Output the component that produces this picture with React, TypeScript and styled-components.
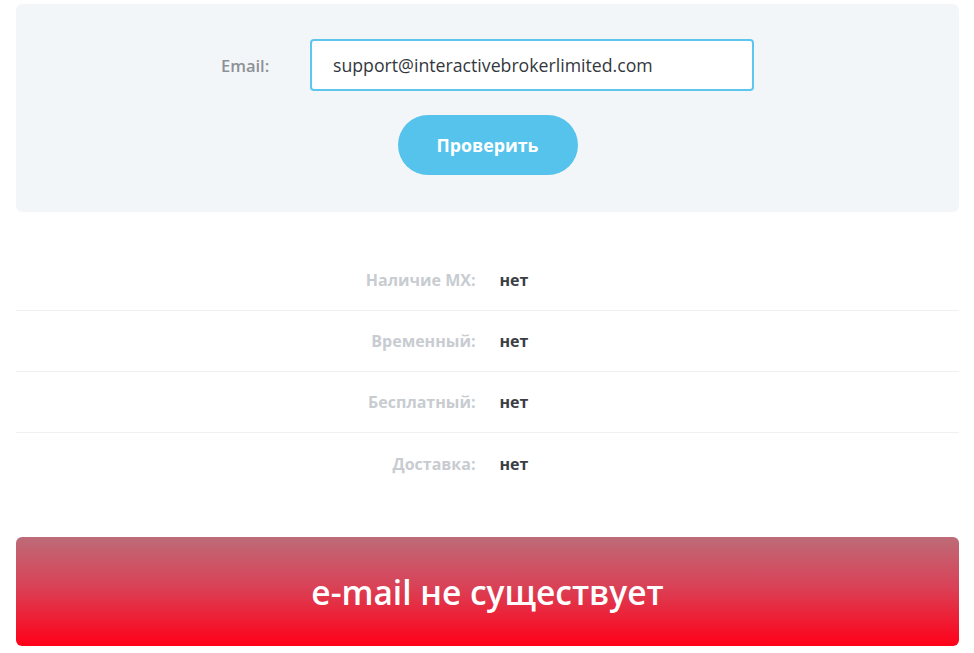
import React from 'react';
import styled, { createGlobalStyle } from 'styled-components';

const GlobalStyle = createGlobalStyle`
  html, body {
    margin: 0;
    padding: 0;
    background: #ffffff;
    font-family: "Open Sans", "Liberation Sans", sans-serif;
  }
  * {
    box-sizing: border-box;
  }
`;

const rows = [
  { label: 'Наличие MX:', value: 'нет' },
  { label: 'Временный:', value: 'нет' },
  { label: 'Бесплатный:', value: 'нет' },
  { label: 'Доставка:', value: 'нет' },
];

function App() {
  return (
    <Page>
      <GlobalStyle />
      <CheckPanel>
        <FormRow>
          <FieldLabel htmlFor="email">Email:</FieldLabel>
          <EmailInput id="email" defaultValue="support@interactivebrokerlimited.com" readOnly />
        </FormRow>
        <CheckButton type="button">Проверить</CheckButton>
      </CheckPanel>

      <ResultList>
        {rows.map((row) => (
          <ResultRow key={row.label}>
            <ResultLabel>{row.label}</ResultLabel>
            <ResultValue>{row.value}</ResultValue>
          </ResultRow>
        ))}
      </ResultList>

      <StatusBanner>e-mail не существует</StatusBanner>
    </Page>
  );
}

const Page = styled.div`
  width: 974px;
  padding: 4px 15px 0 16px;
`;

const CheckPanel = styled.div`
  height: 208px;
  background: #f3f6f8;
  border-radius: 6px;
  padding-top: 35px;
  display: flex;
  flex-direction: column;
  align-items: center;
  gap: 24px;
`;

const FormRow = styled.div`
  display: flex;
  align-items: center;
  gap: 39px;
`;

const FieldLabel = styled.label`
  width: 50px;
  font-size: 16.5px;
  font-weight: 600;
  color: #8d9196;
  white-space: nowrap;
`;

const EmailInput = styled.input`
  width: 444px;
  height: 52px;
  border: 2px solid #5cc6ef;
  border-radius: 4px;
  background: #ffffff;
  padding: 0 21px;
  font-family: "Open Sans", "Liberation Sans", sans-serif;
  font-size: 17.7px;
  color: #33373c;
  outline: none;
`;

const CheckButton = styled.button`
  width: 180px;
  height: 60px;
  border: none;
  border-radius: 30px;
  background: #55c3ec;
  color: #ffffff;
  font-family: "Open Sans", "Liberation Sans", sans-serif;
  font-size: 17.8px;
  font-weight: 700;
  cursor: pointer;
`;

const ResultList = styled.div`
  margin-top: 38px;
`;

const ResultRow = styled.div`
  height: 61px;
  display: grid;
  grid-template-columns: 1fr 1fr;
  column-gap: 24px;
  align-items: center;
  border-bottom: 1px solid #eef0f2;

  &:last-child {
    border-bottom: none;
  }
`;

const ResultLabel = styled.div`
  text-align: right;
  font-size: 16px;
  font-weight: 700;
  color: #c8ccd1;
`;

const ResultValue = styled.div`
  font-size: 16px;
  font-weight: 700;
  color: #3a3e44;
`;

const StatusBanner = styled.div`
  margin-top: 43px;
  height: 109px;
  border-radius: 6px;
  background: linear-gradient(180deg, #bd6b78 0%, #d94257 45%, #ff0018 100%);
  display: flex;
  align-items: center;
  justify-content: center;
  color: #ffffff;
  font-size: 33.5px;
  font-weight: 600;
`;

export default App;
